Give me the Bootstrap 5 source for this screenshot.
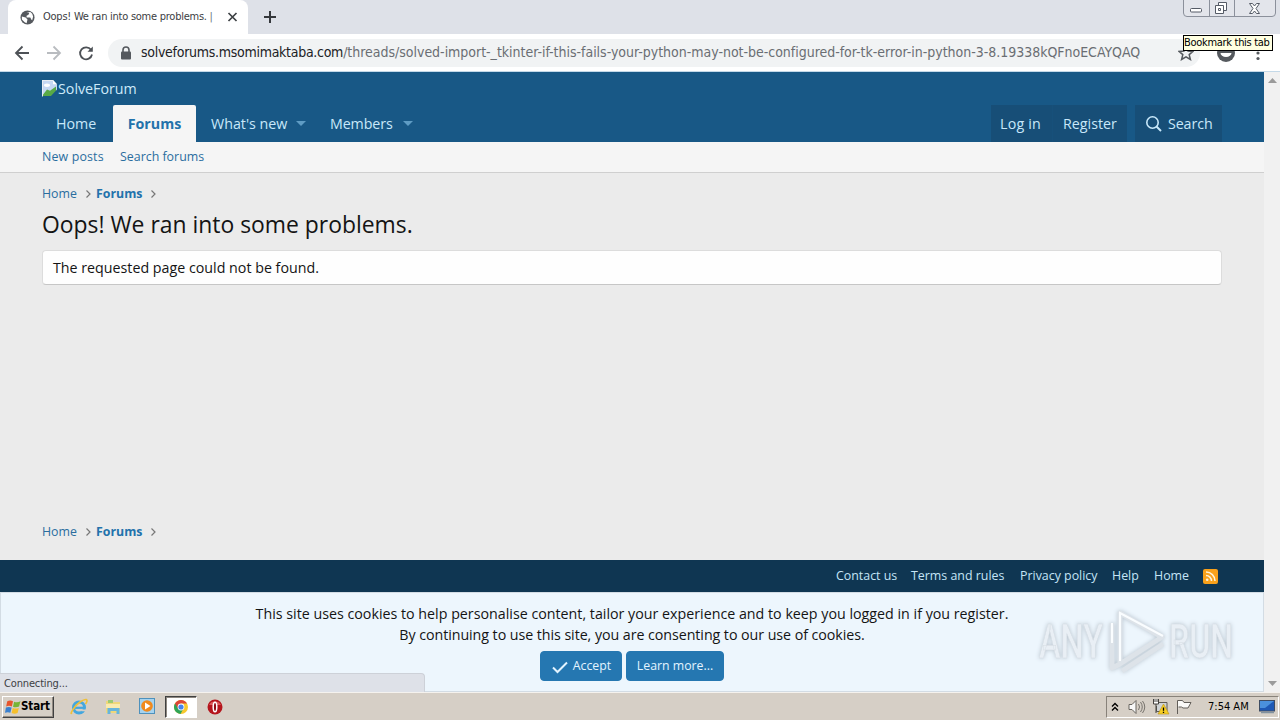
<!DOCTYPE html>
<html lang="en">
<head>
<meta charset="utf-8">
<title>Oops! We ran into some problems. | SolveForum</title>
<link href="https://cdn.jsdelivr.net/npm/bootstrap@5.3.0/dist/css/bootstrap.min.css" rel="stylesheet">
<script src="https://cdn.jsdelivr.net/npm/bootstrap@5.3.0/dist/js/bootstrap.bundle.min.js" defer></script>
<style>
body{width:1280px;height:720px;overflow:hidden;font-family:"DejaVu Sans Condensed","Liberation Sans",sans-serif;font-size:11px;color:#111;background:#fff}
svg{display:block;flex:none}
a{text-decoration:none}
.tabstrip{height:34px;background:#dee1e8;padding-left:8px}
.browser-tab{width:240px;height:34px;background:#fff;border-radius:8px 8px 0 0;padding-left:12px;color:#3c4043;letter-spacing:-.25px}
.browser-tab .title{width:172px;margin-left:8px}
.win-controls{top:-1px;right:4px;width:93px;height:18px;border:1px solid #8b909b;border-radius:0 0 4px 4px;background:#e3e5eb}
.win-controls>span+span{border-left:1px solid #8b909b}
.toolbar{height:38px;padding:0 14px;border-bottom:1px solid #c4d9e8}
.omnibox{width:1092px;height:28px;border-radius:14px;background:#f1f3f4;padding-left:12px;font-size:14px;letter-spacing:-.02px;color:#6a6e73}
.omnibox .domain{color:#202124;letter-spacing:-.28px}
.tip{top:35px;left:1183px;width:90px;height:16px;border:1px solid #000;background:#ffffe1;line-height:14px;letter-spacing:-.3px;color:#000;white-space:nowrap}
.page{height:620px}
.site{width:1264px;font-family:"Open Sans","Noto Sans",sans-serif;font-size:14.25px;color:#141414;background:#ebebeb}
.inner{padding-left:42px;padding-right:42px}
.site-head{height:70px;background:#185886;color:#cdeafa}
.logo-row{height:33px}
.tabs-row{height:37px}
.tabs-row a{height:37px;color:#c8e8fa;display:flex;align-items:center}
.tabs-row .active-tab{background:#f5f5f5;color:#2272ab;font-weight:700;width:83px;border-radius:2px 2px 0 0}
.caret{width:0;height:0;border:5px solid transparent;border-top-color:#5f9cc4;border-bottom:0}
.user-links a{background:#174e77}
.user-links a+a{border-left:1px solid #17507a}
.subnav{height:31px;background:#f5f5f5;border-bottom:1px solid #cfcfcf;font-size:12.4px;padding-top:1px}
.subnav a,.crumbs a{color:#2a6d9f}
.crumbs{font-size:12.35px;height:20px}
.crumbs b{color:#2272ab}
.page-title{font-size:22.9px;line-height:34px;font-weight:400;color:#141414}
.block-msg{height:35px;border:1px solid #dcdcdc;border-bottom-color:#c6c6c6;border-radius:4px;background:#fefefe;padding-left:10px;line-height:33px}
.main-area{height:387px}
.site-foot{height:32px;background:#0f3652;font-size:12.4px;padding-right:46px}
.site-foot a{color:#c5e5f7}
.cookie{height:100px;background:#edf6fd;border:1px solid #d3dce4;line-height:21px;padding-top:10px}
.cookie .btn{--bs-btn-bg:#2577b1;--bs-btn-color:#e3f4ff;--bs-btn-border-color:#2577b1;font-size:12.3px;height:30px;border-radius:4px;padding:1px 0 0}
.watermark{left:1034px;top:603px;overflow:visible;filter:drop-shadow(0 0 2px #b9c4ce)}
.status{left:0;top:673px;width:425px;height:19px;background:#dee1e8;border:1px solid #cdd1d8;border-left:0;border-bottom:0;border-radius:0 4px 0 0;padding-left:4px;line-height:19px;letter-spacing:-.15px;color:#3c4043}
.scroller{width:16px;background:#f1f1f1}
.taskbar{height:28px;background:#d6cfc6;border-top:1px solid #f5f2ee}
.start{margin-left:2px;width:52px;height:22px;border:1px solid;border-color:#fff #404040 #404040 #fff;box-shadow:inset -1px -1px #928b83;font-weight:700;font-size:11.5px;letter-spacing:-.1px;color:#000}
.running{width:32px;height:22px;background:#fff;border:1px solid;border-color:#404040 #fff #fff #404040;box-shadow:inset 1px 1px #8d8780}
.tray{width:173px;height:22px;border:1px solid;border-color:#88827a #fff #fff #88827a;color:#000}
</style>
</head>
<body>
<div class="tabstrip d-flex">
  <div class="browser-tab d-flex align-items-center">
    <svg width="15" height="15" viewBox="0 0 16 16"><circle cx="8" cy="8" r="7.5" fill="#55595e"/><path d="M2 7l4 1 2 2-1 4-2-1-3-3zM7 2l3 1-1 2-2 1v2l4 0 1 2 1 1 1-4-1-3-2-2z" fill="#fff"/></svg>
    <span class="title text-nowrap overflow-hidden">Oops! We ran into some problems. <span class="text-secondary">|</span></span>
    <svg class="ms-2" width="22" height="10" viewBox="0 0 22 10"><path d="M5.500 1l8 8m0-8l-8 8" stroke="#3c4043" stroke-width="1.7"/></svg>
  </div>
  <svg style="margin:10px 0 0 15px" width="14" height="14" viewBox="0 0 14 14"><path d="M7 1v12M1 7h12" stroke="#35383c" stroke-width="2"/></svg>
</div>
<div class="win-controls position-absolute d-flex">
  <span style="width:25px"><svg width="25" height="17"><rect x="6.500" y="8.500" width="11" height="3.500" rx="1" fill="#fff" stroke="#555b66"/></svg></span>
  <span style="width:25px"><svg width="24" height="17" fill="#fff" stroke="#555b66"><path d="M8.500 2.500h8v8h-8z"/><path d="M5.500 5.500h8v8h-8z"/><path d="M8.500 8.500h2v2h-2z"/></svg></span>
  <span class="flex-fill"><svg width="41" height="17"><path d="M14.500 3.500h3l2 2.500 2-2.500h3l-3.500 5 3.500 5h-3l-2-2.500-2 2.500h-3l3.500-5z" fill="#fff" stroke="#555b66"/></svg></span>
</div>
<div class="toolbar d-flex align-items-center">
  <svg width="82" height="18" viewBox="0 0 82 18" fill="none" stroke="#4d5156" stroke-width="1.800"><path d="M15 9H2m6.500-6.500L2 9l6.500 6.500"/><path d="M33 9h13m-6.500-6.500L46 9l-6.500 6.500" stroke="#b9bcc0"/><path d="M77 5.800A6 6 0 1 0 78 10.500"/><path d="M78.800 2.500v5.300h-5.300z" fill="#4d5156" stroke="none"/></svg>
  <div class="omnibox d-flex align-items-center text-nowrap" style="margin-left:12px">
    <svg width="12" height="14" viewBox="0 0 12 14"><path d="M3 6V4a3 3 0 0 1 6 0v2" fill="none" stroke="#55595e" stroke-width="1.600"/><rect x="1" y="5.500" width="10" height="8" rx="1" fill="#55595e"/></svg>
    <span style="margin-left:9px"><span class="domain">solveforums.msomimaktaba.com</span>/threads/solved-import-_tkinter-if-this-fails-your-python-may-not-be-configured-for-tk-error-in-python-3-8.19338kQFnoECAYQAQ</span>
    <svg class="ms-auto" style="margin-right:6px" width="16" height="16" viewBox="0 0 16 16"><path d="M8 1.500l2 4.500 5 .4-3.800 3.200 1.200 4.900L8 11.900l-4.400 2.600 1.200-4.900L1 6.400 6 6z" fill="none" stroke="#55595e" stroke-width="1.500"/></svg>
  </div>
  <svg style="margin-left:16px" width="50" height="20" viewBox="0 0 50 20"><circle cx="10" cy="10" r="9" fill="#55595e"/><path d="M4.500 10h11a5.500 4 0 0 1-11 0z" fill="#fff"/><g fill="#55595e"><circle cx="42" cy="4.500" r="1.600"/><circle cx="42" cy="10" r="1.600"/><circle cx="42" cy="15.500" r="1.600"/></g></svg>
</div>
<div class="tip position-absolute">Bookmark this tab</div>

<div class="page d-flex">
  <div class="site">
    <header class="site-head inner">
      <div class="logo-row d-flex align-items-center">
        <svg width="16" height="17" viewBox="0 0 16 16" preserveAspectRatio="none"><path d="M0 0h11l4 4v11H0z" fill="#c6d8f3"/><path d="M0 15l5-6 3 1 6-4v9z" fill="#58a946"/><path d="M11 0v4h4z" fill="#fff"/><path d="M16 8L8 16h8z" fill="#185886"/><path d="M.5 15.500V.5H11" fill="none" stroke="#e9edf3"/><ellipse cx="5" cy="5" rx="3" ry="1.600" fill="#fff"/></svg>
        <span>SolveForum</span>
      </div>
      <nav class="tabs-row d-flex">
        <a href="#" style="width:71px;padding-left:14px">Home</a>
        <a href="#" class="active-tab justify-content-center">Forums</a>
        <a href="#" style="width:120px;padding-left:15px">What's new<i class="caret" style="margin-left:9px"></i></a>
        <a href="#" style="width:110px;padding-left:14px;letter-spacing:-.1px">Members<i class="caret" style="margin-left:10px"></i></a>
        <div class="user-links d-flex ms-auto">
          <a href="#" style="width:61px;padding-left:9px;letter-spacing:.2px">Log in</a>
          <a href="#" style="width:75px;padding-left:10px">Register</a>
        </div>
        <div class="user-links d-flex" style="margin-left:8px">
          <a href="#" style="width:87px;padding-left:10px;letter-spacing:-.1px"><svg style="margin-right:5px" width="18" height="18" viewBox="0 0 18 18" fill="none" stroke="#c8e8fa" stroke-width="1.600"><circle cx="7.500" cy="7.500" r="5.700"/><path d="M11.500 11.500l4.500 4.500" stroke-width="2"/></svg>Search</a>
        </div>
      </nav>
    </header>
    <div class="subnav inner d-flex align-items-center">
      <a href="#" style="width:78px;letter-spacing:.15px">New posts</a><a href="#">Search forums</a>
    </div>
    <main class="main-area inner d-flex flex-column">
      <div class="crumbs d-flex align-items-center" style="margin-top:11px">
        <a href="#" style="width:43px">Home</a><svg width="11" height="10" viewBox="0 0 11 10"><path d="M1.500 1.500L5 5 1.500 8.500" fill="none" stroke="#777" stroke-width="1.200"/></svg><a href="#" style="width:54px"><b>Forums</b></a><svg width="11" height="10" viewBox="0 0 11 10"><path d="M1.500 1.500L5 5 1.500 8.500" fill="none" stroke="#777" stroke-width="1.200"/></svg>
      </div>
      <h1 class="page-title mb-0" style="margin-top:4px">Oops! We ran into some problems.</h1>
      <div class="block-msg" style="margin-top:8px">The requested page could not be found.</div>
      <div class="crumbs d-flex align-items-center mt-auto" style="margin-bottom:18px">
        <a href="#" style="width:43px">Home</a><svg width="11" height="10" viewBox="0 0 11 10"><path d="M1.500 1.500L5 5 1.500 8.500" fill="none" stroke="#777" stroke-width="1.200"/></svg><a href="#" style="width:54px"><b>Forums</b></a><svg width="11" height="10" viewBox="0 0 11 10"><path d="M1.500 1.500L5 5 1.500 8.500" fill="none" stroke="#777" stroke-width="1.200"/></svg>
      </div>
    </main>
    <footer class="site-foot d-flex align-items-center justify-content-end">
      <a href="#" style="width:75px">Contact us</a><a href="#" style="width:109px">Terms and rules</a><a href="#" style="width:92px">Privacy policy</a><a href="#" style="width:42px">Help</a><a href="#" style="width:49px">Home</a>
      <svg width="15" height="15" viewBox="0 0 15 15"><rect width="15" height="15" rx="2" fill="#f9a11b"/><g fill="none" stroke="#fff3d9" stroke-width="1.500"><path d="M3 3a9 9 0 0 1 9 9M3 6.500A5.500 5.500 0 0 1 8.500 12"/></g><circle cx="4.200" cy="10.800" r="1.300" fill="#fff3d9"/></svg>
    </footer>
    <section class="cookie text-center">
      <div>This site uses cookies to help personalise content, tailor your experience and to keep you logged in if you register.</div>
      <div style="letter-spacing:-.06px">By continuing to use this site, you are consenting to our use of cookies.</div>
      <div class="d-flex justify-content-center gap-1" style="margin-top:6px">
        <button class="btn d-flex align-items-center justify-content-center" style="width:82px"><svg style="margin-right:4px" width="18" height="14" viewBox="0 0 18 14"><path d="M2 7.500l4.500 4.500L16 2.500" fill="none" stroke="#e3f4ff" stroke-width="2"/></svg>Accept</button>
        <button class="btn" style="width:98px">Learn more...</button>
      </div>
    </section>
  </div>
  <div class="scroller d-flex flex-column justify-content-between align-items-center">
    <svg style="margin-top:6px" width="9" height="5"><path d="M0 5l4.500-5L9 5z" fill="#9b9b9b"/></svg>
    <svg style="margin-bottom:6px" width="9" height="5"><path d="M0 0l4.500 5L9 0z" fill="#9b9b9b"/></svg>
  </div>
</div>
<div class="status position-absolute">Connecting...</div>
<svg class="watermark position-absolute" width="220" height="76" viewBox="0 0 220 76">
  <g font-family="Roboto, Liberation Sans, sans-serif" font-size="48" font-weight="500" fill="#e9eff5" stroke="#d6dde4" stroke-width=".6"><text x="5" y="55" textLength="64" lengthAdjust="spacingAndGlyphs">ANY</text><text x="135" y="55" textLength="64" lengthAdjust="spacingAndGlyphs">RUN</text></g>
  <g fill="none" stroke="#dde3e9" stroke-width="5" stroke-linejoin="round"><path d="M78 20v45l8-4V10l42 24-42 27M88 68l41-27"/></g>
  <path d="M86 58V10l43 23M78 20v20" fill="none" stroke="#fafdff" stroke-width="2"/>
</svg>
<footer class="taskbar d-flex align-items-center">
  <div class="start d-flex align-items-center">
    <svg style="margin-left:2px" width="16" height="16" viewBox="0 0 14 14"><path d="M2 2q2.500-1.500 5 0L6 6.500q-2.500-1-5 0z" fill="#e8552c"/><path d="M8 2.300q2.500 1.300 5.500-.3L12.300 6.600q-2.700 1.200-5.300.2z" fill="#77b535"/><path d="M.8 7.500q2.500-1.200 5 0L4.700 12q-2.200-1-4.700 0z" fill="#3a80cf"/><path d="M6.800 7.800q2.500 1.200 5.300 0L11 12.300q-2.500 1.200-5.200 0z" fill="#f6bf2b"/></svg><span style="margin-top:1px">Start</span>
  </div>
  <svg style="margin-left:16px" width="18" height="18" viewBox="0 0 18 18"><circle cx="9" cy="9.500" r="5.500" fill="none" stroke="#43a7df" stroke-width="3"/><path d="M5 9.800h9" stroke="#43a7df" stroke-width="2.200"/><path d="M10.500 11.500h6v1.800h-5z" fill="#d6cfc6"/><path d="M2 15C-1 18 4 8 10 4s9-3 5.500 2" fill="none" stroke="#efc038" stroke-width="1.600"/></svg>
  <svg style="margin-left:17px" width="17" height="17" viewBox="0 0 17 17"><path d="M1 3h5l1 1h8v11H1z" fill="#efd77a"/><path d="M3 2h5v3H3z" fill="#9cca72"/><path d="M1 6h14v4H1z" fill="#f9ebae"/><path d="M2.500 16v-6h12v6h-3v-3h-6v3z" fill="#67b5dc"/></svg>
  <svg style="margin-left:17px" width="17" height="17" viewBox="0 0 17 17"><rect x=".5" y=".5" width="15" height="15" fill="#a6d3ef" stroke="#4e91bc"/><circle cx="8" cy="8" r="5.800" fill="#f08a1d"/><path d="M6 4.500v7L11.500 8z" fill="#fff"/></svg>
  <div class="running d-flex align-items-center justify-content-center" style="margin-left:9px">
    <svg width="14" height="14" viewBox="0 0 14 14"><circle cx="7" cy="7" r="7" fill="#f7c82e"/><path d="M7 7h0L1 3.400A7 7 0 0 0 6.500 14L9.500 8.500z" fill="#2fa457"/><path d="M7 3.500h6.100L13 3.500A7 7 0 0 0 1 3.400L4 8.500z" fill="#dd4637"/><circle cx="7" cy="7" r="3.400" fill="#fff"/><circle cx="7" cy="7" r="2.600" fill="#4583ec"/></svg>
  </div>
  <svg style="margin-left:10px" width="16" height="16" viewBox="0 0 16 16"><circle cx="8" cy="8" r="7.500" fill="#b5151c"/><path d="M2 6a6.500 5.500 0 0 1 12 0z" fill="#dc5b5b"/><ellipse cx="8" cy="8" rx="1.800" ry="4.800" fill="#8f0b12" stroke="#fff" stroke-width="1.500"/></svg>
  <div class="tray ms-auto d-flex align-items-center" style="margin-right:1px">
    <svg style="margin-left:4px" width="8" height="10" viewBox="0 0 8 10"><path d="M1 4.500l3-3 3 3M1 8.500l3-3 3 3" fill="none" stroke="#000" stroke-width="1.400"/></svg>
    <svg style="margin-left:9px" width="18" height="16" viewBox="0 0 18 16"><path d="M1 5.500h3l4-4v13l-4-4H1z" fill="#f8f8f8" stroke="#69655f"/><path d="M10.500 5q2 3 0 6M12.500 3q3.500 5 0 10M14.500 2q4.500 6 0 12" fill="none" stroke="#77736d"/></svg>
    <svg style="margin-left:6px" width="18" height="17" viewBox="0 0 18 17"><path d="M6 4.500h9v9H4.500V8" fill="#cfd3d5" stroke="#5d5a55"/><path d="M1.500 1v5h5V1M4 6v9M3 1v3M5 1v3" fill="#fff" stroke="#45423f"/><path d="M11.500 6l5.500 10H6z" fill="#f8cf24" stroke="#bb9112" stroke-width=".6"/><path d="M11.500 9.500v3.300m0 1v1.200" stroke="#000" stroke-width="1.300"/></svg>
    <svg style="margin-left:5px" width="18" height="16" viewBox="0 0 18 16"><path d="M2.500 15V1.500h5l1.500 2h7l-3 5.500H8L6.500 8h-3" fill="#faf9f7" stroke="#625e59"/></svg>
    <span style="margin:2px 0 0 15px;width:51px">7:54 AM</span>
    <svg width="17" height="14" viewBox="0 0 17 14"><rect x=".5" y=".5" width="15" height="10.500" fill="#1e59b5" stroke="#3e4c62"/><path d="M1 1h14L6 8H1z" fill="#4a91dd"/><path d="M2 12.500h13" stroke="#82929f" stroke-width="1.500"/></svg>
  </div>
</footer>
</body>
</html>
